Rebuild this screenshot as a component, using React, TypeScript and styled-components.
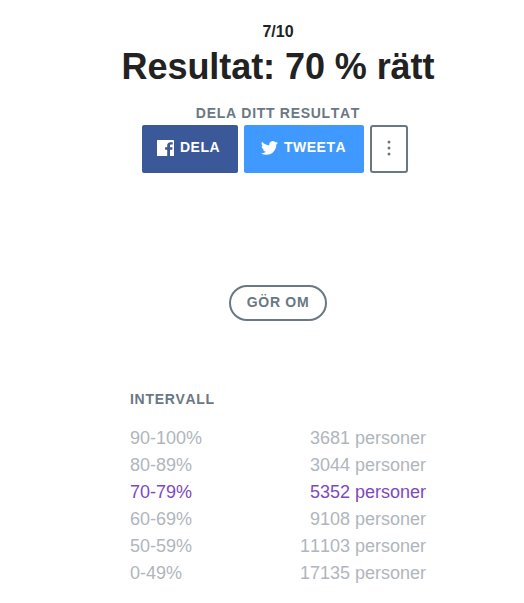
import React from "react";
import styled, { createGlobalStyle, css } from "styled-components";

const GlobalStyle = createGlobalStyle`
  *, *::before, *::after { box-sizing: border-box; }
  body {
    margin: 0;
    background: #fff;
    color: #222;
    font-family: "Liberation Sans", Arial, sans-serif;
    font-kerning: none;
  }
`;

const slate = "#6a7883";

const Page = styled.main`
  width: 524px;
  height: 603px;
  overflow: hidden;
  padding: 20px 0 0 32px;
  display: flex;
  flex-direction: column;
  align-items: center;
`;

const Score = styled.p`
  margin: 0;
  font-size: 16px;
  font-weight: 700;
  line-height: 24px;
`;

const Title = styled.h1`
  margin: 0;
  font-size: 36px;
  font-weight: 700;
  letter-spacing: -0.07px;
  line-height: 46px;
  white-space: nowrap;
`;

const caps = css`
  font-size: 14px;
  font-weight: 700;
  letter-spacing: 0.7px;
  text-transform: uppercase;
  white-space: nowrap;
`;

const ShareLabel = styled.p`
  ${caps}
  margin: 12px 0 1px;
  line-height: 22px;
  color: ${slate};
`;

const ShareRow = styled.div`
  display: flex;
  gap: 6px;
  width: 272px;
`;

const ShareButton = styled.button<{ $fill: string; $width: number; $inset: number }>`
  ${caps}
  letter-spacing: 0.5px;
  display: flex;
  align-items: center;
  width: ${({ $width }) => $width}px;
  height: 48px;
  padding: 0 0 4px ${({ $inset }) => $inset}px;
  border: 0;
  border-radius: 2px;
  background: ${({ $fill }) => $fill};
  color: #fff;
  font-family: inherit;
  font-kerning: none;
`;

const Glyph = styled.svg`
  flex: none;
  margin: 2px 6px 0 0;
  fill: #fff;
`;

const MoreButton = styled.button`
  display: grid;
  place-items: center;
  width: 38px;
  height: 48px;
  padding: 0 1px 3px 0;
  border: 2px solid ${slate};
  border-radius: 3px;
  background: #fff;
`;

const RetryButton = styled.button`
  ${caps}
  width: 98px;
  height: 36px;
  margin-top: 112px;
  padding: 0 0 3px;
  border: 2px solid ${slate};
  border-radius: 18px;
  background: #fff;
  color: ${slate};
  font-family: inherit;
  font-kerning: none;
`;

const Stats = styled.section`
  width: 296px;
  margin-top: 67px;
`;

const StatsTitle = styled.h2`
  ${caps}
  margin: 0 0 15px;
  line-height: 22px;
  color: ${slate};
`;

const StatRow = styled.div<{ $active: boolean }>`
  display: flex;
  justify-content: space-between;
  font-size: 18px;
  line-height: 27px;
  color: ${({ $active }) => ($active ? "#8048c0" : "#b0b6bc")};
`;

const rows = [
  { range: "90-100%", count: 3681 },
  { range: "80-89%", count: 3044 },
  { range: "70-79%", count: 5352, active: true },
  { range: "60-69%", count: 9108 },
  { range: "50-59%", count: 11103 },
  { range: "0-49%", count: 17135 },
];

export default function App() {
  return (
    <>
      <GlobalStyle />
      <Page>
        <Score>7/10</Score>
        <Title>Resultat: 70 % rätt</Title>
        <ShareLabel>Dela ditt resultat</ShareLabel>
        <ShareRow>
          <ShareButton $fill="#3b5998" $width={96} $inset={15}>
            <Glyph width="17" height="16" viewBox="0 0 17 16" aria-hidden>
              <path d="M.6 0h15.800a.6.6 0 0 1 .6.6v14.800a.6.6 0 0 1-.6.6H13V9.800h2.200l.4-2.500H13V5.700c0-.700.4-1.100 1.200-1.100h1.500V2.300h-2.200C11.300 2.300 10.200 3.600 10.200 5.500v1.800H8.100v2.500h2.100V16H.6a.6.6 0 0 1-.6-.6V.6a.6.6 0 0 1 .6-.6z" />
            </Glyph>
            Dela
          </ShareButton>
          <ShareButton $fill="#4099ff" $width={120} $inset={17}>
            <Glyph width="17" height="14" viewBox="0 2 24 20" preserveAspectRatio="none" aria-hidden>
              <path d="M23.950 4.570a10 10 0 0 1-2.820.770 4.960 4.960 0 0 0 2.160-2.720c-.950.550-2 .950-3.130 1.180a4.920 4.920 0 0 0-8.380 4.480C7.690 8.090 4.070 6.130 1.640 3.160a4.920 4.920 0 0 0 1.520 6.570 4.900 4.900 0 0 1-2.230-.610v.060a4.920 4.920 0 0 0 3.950 4.830 5 5 0 0 1-2.210.080 4.940 4.940 0 0 0 4.600 3.420A9.870 9.870 0 0 1 0 19.540a14 14 0 0 0 7.550 2.210c9.050 0 14-7.500 14-13.980 0-.210 0-.420-.020-.630a9.940 9.940 0 0 0 2.420-2.570z" />
            </Glyph>
            Tweeta
          </ShareButton>
          <MoreButton aria-label="Fler alternativ">
            <svg width="4" height="16" viewBox="0 0 4 16" fill={slate} aria-hidden>
              <circle cx="2" cy="2" r="1.500" />
              <circle cx="2" cy="8" r="1.500" />
              <circle cx="2" cy="14" r="1.500" />
            </svg>
          </MoreButton>
        </ShareRow>
        <RetryButton>Gör om</RetryButton>
        <Stats>
          <StatsTitle>Intervall</StatsTitle>
          {rows.map(({ range, count, active }) => (
            <StatRow key={range} $active={!!active}>
              <span>{range}</span>
              <span>{count} personer</span>
            </StatRow>
          ))}
        </Stats>
      </Page>
    </>
  );
}
